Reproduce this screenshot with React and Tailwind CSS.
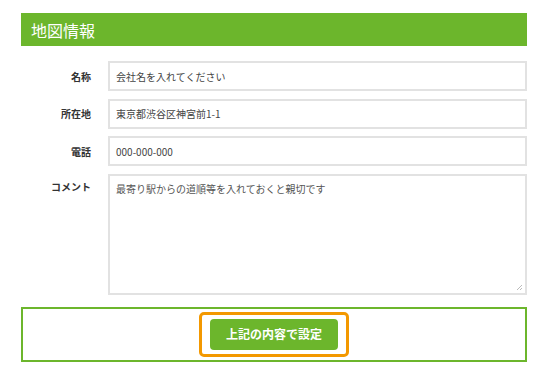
export default function App() {
  const font = { fontFamily: '"Noto Sans CJK JP", "Noto Sans", sans-serif' };
  const rows = [
    { label: "名称", value: "会社名を入れてください" },
    { label: "所在地", value: "東京都渋谷区神宮前1-1" },
    { label: "電話", value: "000-000-000" },
  ];
  return (
    <div className="w-[550px] h-[380px] bg-white pt-[13px] pl-[21px]" style={font}>
      <div className="w-[506px]">
        <div className="h-[33px] bg-[#6cb62c] flex items-center pl-[10px] text-white text-[16px]">
          地図情報
        </div>
        <div className="mt-[15px] flex flex-col gap-[7.5px]">
          {rows.map((r) => (
            <div key={r.label} className="flex items-center">
              <div className="w-[70px] text-right text-[10px] font-bold text-[#333]">{r.label}</div>
              <div className="ml-[17px] flex-1 h-[30px] border-2 border-[#e2e2e2] flex items-center pl-[6px] text-[10px] text-[#444]">
                {r.value}
              </div>
            </div>
          ))}
          <div className="flex items-start">
            <div className="w-[70px] text-right text-[10px] font-bold text-[#333] pt-[5px]">コメント</div>
            <div className="ml-[17px] flex-1 h-[121px] border-2 border-[#e2e2e2] pl-[6px] pt-[5px] text-[10px] text-[#555] relative">
              最寄り駅からの道順等を入れておくと親切です
              <svg className="absolute right-[2px] bottom-[2px]" width="7" height="7" viewBox="0 0 7 7">
                <path d="M6 1 L1 6 M6 4 L4 6" stroke="#bbb" strokeWidth="1" />
              </svg>
            </div>
          </div>
        </div>
        <div className="mt-[12px] h-[55px] border-2 border-[#6cb62c] flex items-center justify-center">
          <div className="border-[3px] border-[#f39800] rounded-[5px] px-[8px] py-[4px]">
            <div className="w-[128px] h-[31px] bg-[#6cb62c] rounded-[4px] flex items-center justify-center text-white text-[12px] font-bold">
              上記の内容で設定
            </div>
          </div>
        </div>
      </div>
    </div>
  );
}
